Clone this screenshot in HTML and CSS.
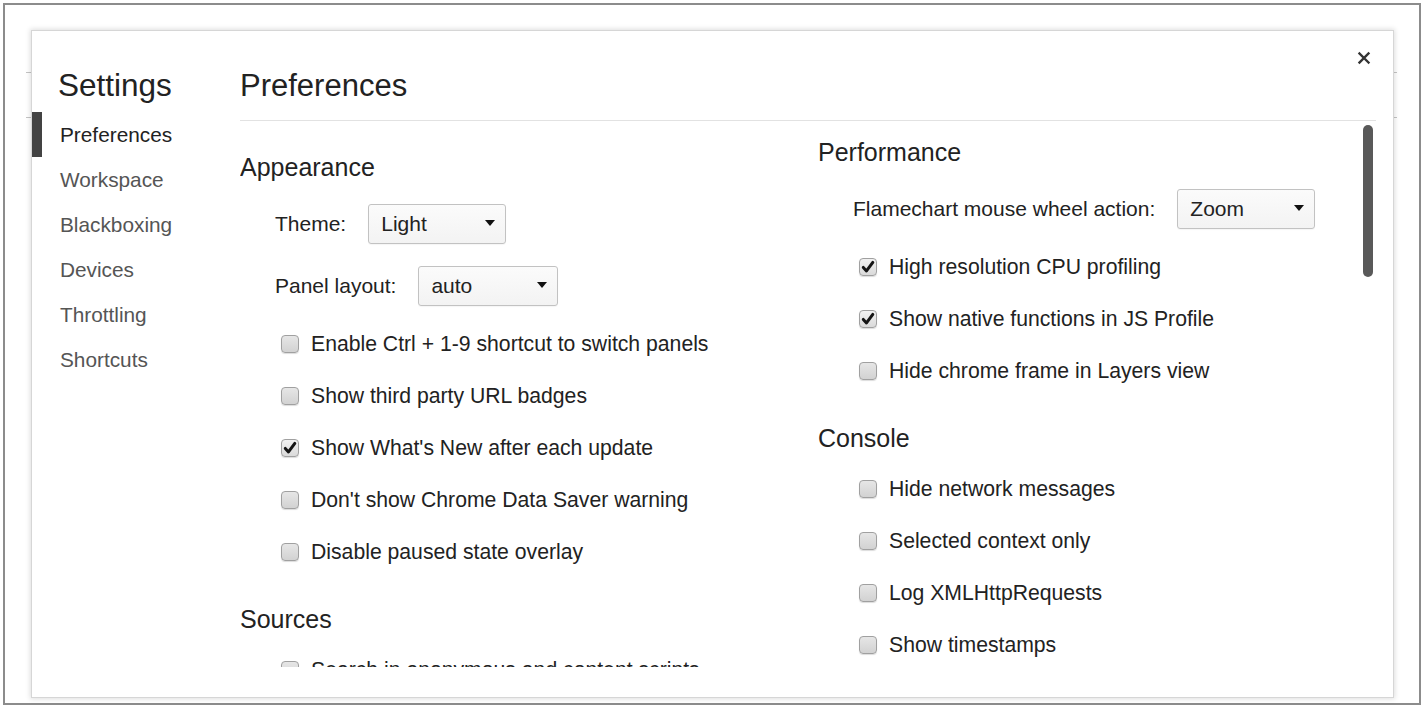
FILE: index.html
```html
<!DOCTYPE html>
<html lang="en">
<head>
<meta charset="utf-8">
<title>Settings</title>
<link rel="stylesheet" href="styles.css">
</head>
<body>
<div class="frame">
  <div class="backdrop"></div>
  <div class="dialog">
    <aside class="sidebar">
      <h1 class="sidebar-title">Settings</h1>
      <nav class="tabs">
        <div class="tab active">Preferences</div>
        <div class="tab">Workspace</div>
        <div class="tab">Blackboxing</div>
        <div class="tab">Devices</div>
        <div class="tab">Throttling</div>
        <div class="tab">Shortcuts</div>
      </nav>
    </aside>
    <main class="panel">
      <header class="panel-header"><h2 class="panel-title">Preferences</h2></header>
      <div class="scroll">
        <div class="columns">
          <div class="col col-left">
            <section class="group">
              <h3 class="group-title">Appearance</h3>
              <div class="field">
                <span class="field-label">Theme:</span>
                <span class="select w138"><span class="select-value">Light</span><span class="arrow"></span></span>
              </div>
              <div class="field">
                <span class="field-label">Panel layout:</span>
                <span class="select w140"><span class="select-value">auto</span><span class="arrow"></span></span>
              </div>
              <label class="check"><span class="box"></span><span class="check-label">Enable Ctrl + 1-9 shortcut to switch panels</span></label>
              <label class="check"><span class="box"></span><span class="check-label">Show third party URL badges</span></label>
              <label class="check"><span class="box checked"><svg viewBox="0 0 18 18" width="18" height="18"><path d="M4.3 9.4 L7.5 12.9 L13.8 4.4" fill="none" stroke="#151515" stroke-width="3" stroke-linecap="round" stroke-linejoin="round"/></svg></span><span class="check-label">Show What's New after each update</span></label>
              <label class="check"><span class="box"></span><span class="check-label">Don't show Chrome Data Saver warning</span></label>
              <label class="check"><span class="box"></span><span class="check-label">Disable paused state overlay</span></label>
            </section>
            <section class="group">
              <h3 class="group-title">Sources</h3>
              <label class="check"><span class="box"></span><span class="check-label">Search in anonymous and content scripts</span></label>
            </section>
          </div>
          <div class="col col-right">
            <section class="group">
              <h3 class="group-title">Performance</h3>
              <div class="field">
                <span class="field-label">Flamechart mouse wheel action:</span>
                <span class="select w138"><span class="select-value">Zoom</span><span class="arrow"></span></span>
              </div>
              <label class="check"><span class="box checked"><svg viewBox="0 0 18 18" width="18" height="18"><path d="M4.3 9.4 L7.5 12.9 L13.8 4.4" fill="none" stroke="#151515" stroke-width="3" stroke-linecap="round" stroke-linejoin="round"/></svg></span><span class="check-label">High resolution CPU profiling</span></label>
              <label class="check"><span class="box checked"><svg viewBox="0 0 18 18" width="18" height="18"><path d="M4.3 9.4 L7.5 12.9 L13.8 4.4" fill="none" stroke="#151515" stroke-width="3" stroke-linecap="round" stroke-linejoin="round"/></svg></span><span class="check-label">Show native functions in JS Profile</span></label>
              <label class="check"><span class="box"></span><span class="check-label">Hide chrome frame in Layers view</span></label>
            </section>
            <section class="group">
              <h3 class="group-title">Console</h3>
              <label class="check"><span class="box"></span><span class="check-label">Hide network messages</span></label>
              <label class="check"><span class="box"></span><span class="check-label">Selected context only</span></label>
              <label class="check"><span class="box"></span><span class="check-label">Log XMLHttpRequests</span></label>
              <label class="check"><span class="box"></span><span class="check-label">Show timestamps</span></label>
            </section>
          </div>
        </div>
        <div class="thumb"></div>
      </div>
    </main>
    <button class="close" aria-label="Close"><svg viewBox="0 0 14 14" width="14" height="14"><path d="M2.5 2.5 L11.5 11.5 M11.5 2.5 L2.5 11.5" stroke="#333" stroke-width="2.4" stroke-linecap="square"/></svg></button>
  </div>
</div>
</body>
</html>
```
FILE: styles.css
```css
* { box-sizing: border-box; }

html, body {
  margin: 0;
  padding: 0;
  background: #ffffff;
}

body {
  font-family: "Liberation Sans", Arial, Helvetica, sans-serif;
  color: #222;
  width: 1425px;
  height: 709px;
  overflow: hidden;
}

.frame {
  position: relative;
  margin: 3px;
  width: 1418px;
  height: 702px;
  border: 2px solid #8c8c8c;
  background: #fff;
}

.backdrop {
  margin: 67px 0 0 21px;
  width: 1371px;
  height: 46px;
  border-top: 1px solid #c4c4c4;
  border-bottom: 1px solid #c4c4c4;
}

.dialog {
  position: absolute;
  left: 26px;
  top: 25px;
  width: 1363px;
  height: 668px;
  display: flex;
  background: #fff;
  border: 1px solid #d6d6d6;
  box-shadow: 0 0 5px 1px rgba(0, 0, 0, 0.13);
}

/* sidebar */
.sidebar {
  width: 208px;
  flex: none;
}

.sidebar-title {
  margin: 0 0 9px 0;
  padding: 36px 0 0 26px;
  font-size: 31.5px;
  line-height: 36px;
  font-weight: normal;
  color: #222;
}

.tabs {
  display: flex;
  flex-direction: column;
}

.tab {
  height: 45px;
  line-height: 45px;
  padding-left: 28px;
  font-size: 20.8px;
  color: #555;
}

.tab.active {
  border-left: 10px solid #434343;
  padding-left: 18px;
  color: #222;
}

/* main panel */
.panel {
  flex: 1;
  display: flex;
  flex-direction: column;
  padding: 0 17px 30px 0;
  min-width: 0;
}

.panel-header {
  padding: 37px 0 16px 0;
  border-bottom: 1px solid #e2e2e2;
}

.panel-title {
  margin: 0;
  font-size: 31px;
  line-height: 36px;
  font-weight: normal;
  color: #222;
}

.scroll {
  position: relative;
  flex: 1;
  overflow: hidden;
}

.columns {
  display: grid;
  grid-template-columns: 578px 1fr;
}

.col-left { padding-top: 31px; }
.col-right { padding-top: 16px; }

.group + .group { margin-top: 26px; }

.group-title {
  margin: 0;
  font-size: 25px;
  line-height: 30px;
  font-weight: normal;
  color: #222;
}

.field {
  display: flex;
  align-items: center;
  margin-top: 22px;
  padding-left: 35px;
  height: 40px;
}

.field-label {
  font-size: 21px;
  color: #222;
}

.select {
  display: flex;
  align-items: center;
  justify-content: space-between;
  margin-left: 22px;
  height: 40px;
  padding: 0 10px 0 12px;
  border: 1px solid #c2c2c2;
  border-radius: 3px;
  background: linear-gradient(#fbfbfb, #f3f3f3);
  box-shadow: 0 1px 1px rgba(0, 0, 0, 0.04);
  font-size: 21px;
  color: #222;
}

.w138 { width: 138px; }
.w140 { width: 140px; }

.arrow {
  width: 0;
  height: 0;
  border-left: 5px solid transparent;
  border-right: 5px solid transparent;
  border-top: 6px solid #111;
  margin-top: -3px;
}

.field + .check { margin-top: 12px; }
.group-title + .check { margin-top: 10px; }

.check {
  display: flex;
  align-items: center;
  height: 52px;
  padding-left: 41px;
  gap: 12px;
}

.box {
  flex: none;
  width: 18px;
  height: 18px;
  border: 1px solid #a0a0a0;
  border-radius: 4px;
  background: linear-gradient(#e6e6e6, #d2d2d2);
  box-shadow: 0 1px 1px rgba(0, 0, 0, 0.14);
  position: relative;
}

.box svg {
  position: absolute;
  left: -1px;
  top: -1px;
}

.box.checked {
  background: linear-gradient(#f1f1f1, #dadada);
}

.check-label {
  font-size: 21.2px;
  color: #222;
  white-space: nowrap;
}

.thumb {
  position: absolute;
  right: 3px;
  top: 4px;
  width: 10px;
  height: 152px;
  border-radius: 5px;
  background: #595959;
}

.close {
  position: absolute;
  right: 19px;
  top: 17px;
  width: 20px;
  height: 20px;
  padding: 3px;
  border: none;
  background: transparent;
  display: flex;
  align-items: center;
  justify-content: center;
}
```
